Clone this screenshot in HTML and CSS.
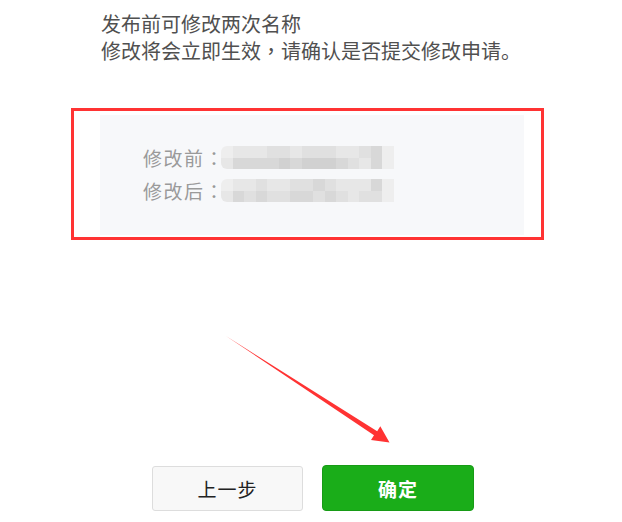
FILE: index.html
```html
<!DOCTYPE html>
<html lang="zh-CN">
<head>
<meta charset="utf-8">
<title>修改名称</title>
<link rel="stylesheet" href="styles.css">
</head>
<body>
<div class="page">
  <div class="intro">
    <p class="line">发布前可修改两次名称</p>
    <p class="line">修改将会立即生效<span class="punct" lang="zh-TW">，</span>请确认是否提交修改申请。</p>
  </div>

  <div class="highlight">
    <div class="panel">
      <div class="row">
        <span class="label">修改前<span class="punct" lang="zh-TW">：</span></span>
        <span class="mosaic">
          <i class="g1"></i><i class="g2"></i><i class="g2"></i><i class="g2"></i><i class="g3"></i><i class="g3"></i><i class="g2"></i><i class="g3"></i><i class="g3"></i><i class="g3"></i><i class="g2"></i><i class="g2"></i><i class="g3"></i><i class="g4"></i><i class="g1"></i>
          <i class="g2"></i><i class="g4"></i><i class="g4"></i><i class="g4"></i><i class="g4"></i><i class="g5"></i><i class="g4"></i><i class="g5"></i><i class="g5"></i><i class="g5"></i><i class="g4"></i><i class="g3"></i><i class="g2"></i><i class="g4"></i><i class="g1"></i>
        </span>
      </div>
      <div class="row">
        <span class="label">修改后<span class="punct" lang="zh-TW">：</span></span>
        <span class="mosaic">
          <i class="g1"></i><i class="g2"></i><i class="g2"></i><i class="g3"></i><i class="g2"></i><i class="g2"></i><i class="g3"></i><i class="g3"></i><i class="g4"></i><i class="g3"></i><i class="g2"></i><i class="g2"></i><i class="g2"></i><i class="g4"></i><i class="g1"></i>
          <i class="g2"></i><i class="g4"></i><i class="g3"></i><i class="g4"></i><i class="g3"></i><i class="g3"></i><i class="g4"></i><i class="g4"></i><i class="g3"></i><i class="g4"></i><i class="g3"></i><i class="g2"></i><i class="g3"></i><i class="g3"></i><i class="g1"></i>
        </span>
      </div>
    </div>
  </div>

  <div class="actions">
    <button class="btn btn-default" type="button">上一步</button>
    <button class="btn btn-primary" type="button">确定</button>
  </div>

  <svg class="arrow" width="622" height="522" viewBox="0 0 622 522" aria-hidden="true">
    <polygon points="226,336 377.2,431.2 380.3,426.3 389.5,442.5 371,440 374,435.2" fill="#ff3333"/>
  </svg>
</div>
</body>
</html>
```

FILE: styles.css
```css
* {
  box-sizing: border-box;
}

html, body {
  margin: 0;
  padding: 0;
  background: #ffffff;
}

body {
  font-family: "Noto Sans CJK SC", "Noto Sans", "Liberation Sans", sans-serif;
  color: #4a4a4a;
}

.page {
  position: relative;
  width: 622px;
  height: 522px;
  overflow: hidden;
}

.intro {
  padding: 10px 0 0 101px;
}

.line {
  margin: 0;
  font-size: 20px;
  line-height: 27px;
  color: #505050;
  white-space: nowrap;
}

.punct {
  font-family: "Noto Sans CJK TC", "Noto Sans CJK SC", sans-serif;
}

.highlight {
  margin: 44px 0 0 71px;
  width: 473px;
  height: 132px;
  border: 3px solid #ff3333;
  padding: 4px 17px 2px 26px;
}

.panel {
  width: 424px;
  height: 120px;
  background: #f7f8fa;
  padding: 26px 0 0 43px;
  display: flex;
  flex-direction: column;
}

.row {
  display: flex;
  align-items: center;
  height: 33px;
}

.label {
  width: 79px;
  font-size: 19px;
  letter-spacing: 1.5px;
  color: #9a9a9a;
  white-space: nowrap;
  line-height: 33px;
}

.mosaic {
  display: grid;
  grid-template-columns: repeat(15, 11.5px);
  grid-template-rows: 11.5px 11.5px;
  margin-left: -1px;
  border-radius: 6px 0 0 6px;
  overflow: hidden;
}

.mosaic i {
  display: block;
}

.g1 { background: #eeeeee; }
.g2 { background: #e7e7e7; }
.g3 { background: #e0e0e0; }
.g4 { background: #d8d8d8; }
.g5 { background: #d1d1d1; }

.actions {
  display: flex;
  align-items: flex-start;
  gap: 19px;
  margin-top: 225px;
  padding-left: 152px;
}

.btn {
  font-family: "Noto Sans CJK SC", "Noto Sans", sans-serif;
  font-size: 19px;
  letter-spacing: 1px;
  cursor: pointer;
  padding: 0;
}

.btn-default {
  width: 151px;
  height: 45px;
  margin-top: 1px;
  background: #f8f8f8;
  border: 1px solid #dddddd;
  border-radius: 3px;
  color: #222222;
}

.btn-primary {
  width: 152px;
  height: 46px;
  background: #1aad19;
  border: 1px solid #179b16;
  border-radius: 4px;
  color: #ffffff;
  font-weight: 700;
}

.arrow {
  position: absolute;
  left: 0;
  top: 0;
  pointer-events: none;
}
```
